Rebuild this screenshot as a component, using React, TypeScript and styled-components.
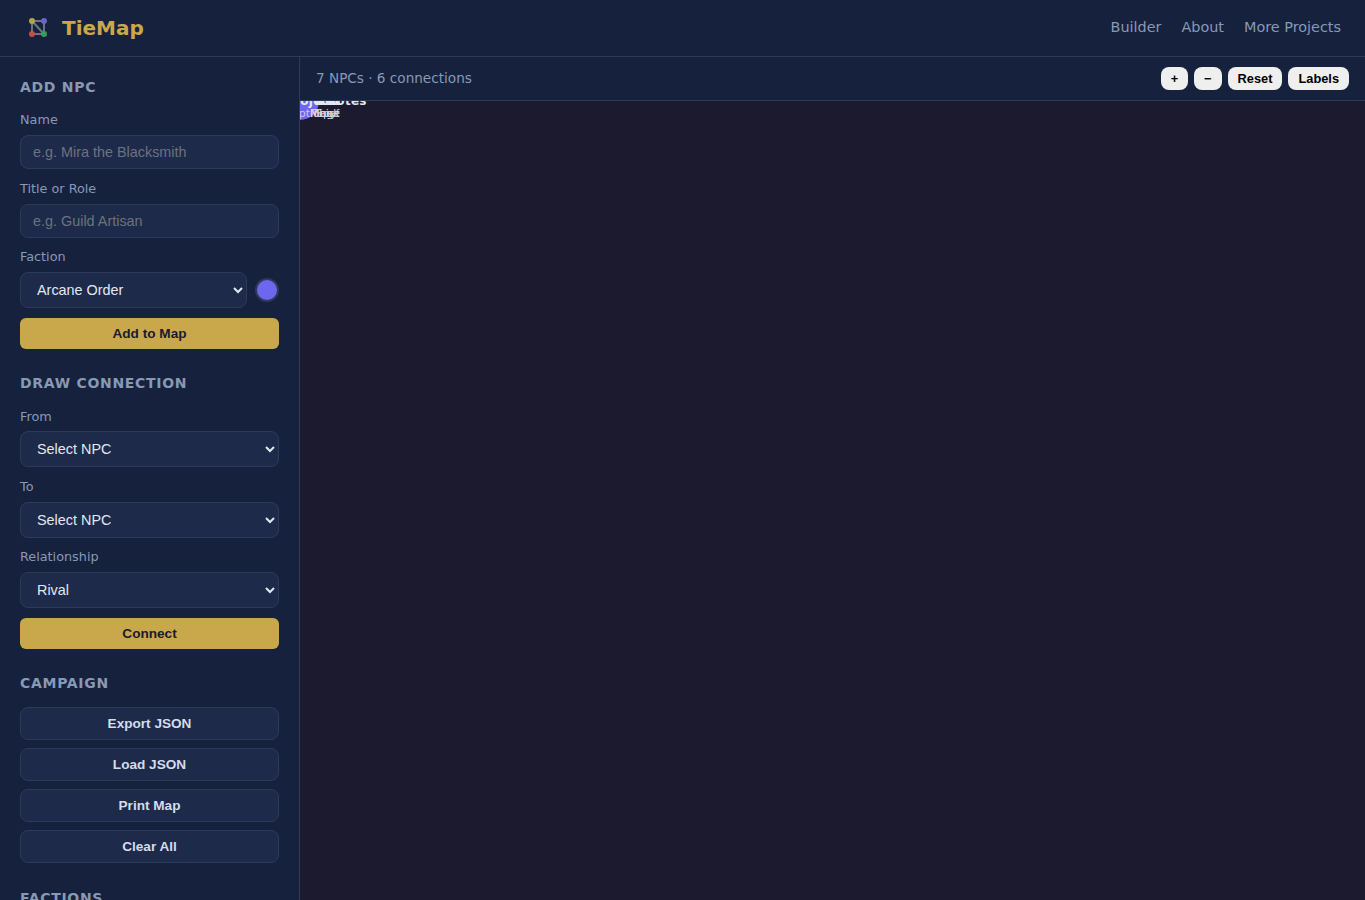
import React from "react";
import styled, { createGlobalStyle } from "styled-components";

const GlobalStyle = createGlobalStyle`
  html, body {
    margin: 0;
    height: 100%;
    overflow: hidden;
    background: #1c1a2e;
  }
  * {
    box-sizing: border-box;
  }
`;

const Page = styled.div`
  height: 900px;
  display: flex;
  flex-direction: column;
  font-family: "DejaVu Sans", sans-serif;
  color: #e2e8f0;
`;

const Header = styled.header`
  height: 57px;
  flex-shrink: 0;
  display: flex;
  align-items: center;
  justify-content: space-between;
  padding: 0 24px 2px;
  background: #16213e;
  border-bottom: 1px solid #2d3a5c;
`;

const Brand = styled.div`
  display: flex;
  align-items: center;
  gap: 10px;
  margin-top: 2px;
  font-size: 20px;
  font-weight: 700;
  color: #c9a84c;
`;

const Nav = styled.nav`
  display: flex;
  gap: 20px;
`;

const NavLink = styled.a`
  font-size: 14.4px;
  color: #8899b4;
`;

const Body = styled.div`
  flex: 1;
  display: flex;
  min-height: 0;
`;

const Sidebar = styled.aside`
  width: 300px;
  flex-shrink: 0;
  padding: 20px 20px 0;
  background: #16213e;
  border-right: 1px solid #2d3a5c;
  overflow: hidden;
`;

const Section = styled.section`
  margin-bottom: 24.6px;
`;

const SectionTitle = styled.h3`
  margin: 0 0 12.3px;
  font-size: 14px;
  line-height: 21px;
  font-weight: 700;
  letter-spacing: 0.7px;
  color: #8899b4;
  text-transform: uppercase;
`;

const Field = styled.div`
  margin-bottom: 9.7px;
`;

const Label = styled.label`
  display: block;
  margin-bottom: 4.4px;
  font-size: 12.8px;
  line-height: 20.4px;
  color: #8899b4;
`;

const TextInput = styled.input`
  display: block;
  width: 100%;
  height: 34px;
  padding: 0 12px;
  font-family: "Liberation Sans", Arial, sans-serif;
  font-size: 14.4px;
  color: #e2e8f0;
  background: #1e2a4a;
  border: 1px solid #2d3a5c;
  border-radius: 8px;
  &::placeholder {
    color: #6b7280;
  }
`;

const Select = styled.select`
  display: block;
  width: 100%;
  height: 35.9px;
  padding: 0 12px;
  font-family: "Liberation Sans", Arial, sans-serif;
  font-size: 14.4px;
  color: #e2e8f0;
  background: #1e2a4a;
  border: 1px solid #2d3a5c;
  border-radius: 8px;
`;

const ColorRow = styled.div`
  display: flex;
  align-items: center;
  gap: 8px;
`;

const Swatch = styled.span<{ $color: string }>`
  width: 24px;
  height: 24px;
  flex-shrink: 0;
  border-radius: 50%;
  background: ${(p) => p.$color};
  border: 2px solid #2d3a5c;
`;

const PrimaryButton = styled.button`
  display: block;
  width: 100%;
  height: 31px;
  font-family: "Liberation Sans", Arial, sans-serif;
  font-size: 13.6px;
  font-weight: 700;
  color: #1a1a2e;
  background: #c9a84c;
  border: none;
  border-radius: 6px;
`;

const ButtonStack = styled.div`
  display: grid;
  gap: 8px;
  margin-top: 13px;
`;

const GhostButton = styled.button`
  display: block;
  width: 100%;
  height: 33px;
  font-family: "Liberation Sans", Arial, sans-serif;
  font-size: 13.6px;
  font-weight: 700;
  color: #d5dcea;
  background: #1e2a4a;
  border: 1px solid #2d3a5c;
  border-radius: 8px;
`;

const Main = styled.main`
  flex: 1;
  display: flex;
  flex-direction: column;
  min-width: 0;
`;

const Toolbar = styled.div`
  height: 44px;
  flex-shrink: 0;
  display: flex;
  align-items: center;
  justify-content: space-between;
  padding: 0 16px;
  background: #16213e;
  border-bottom: 1px solid #2d3a5c;
`;

const Stats = styled.span`
  margin-top: -1px;
  font-size: 13.6px;
  color: #8899b4;
`;

const Controls = styled.div`
  display: flex;
  gap: 6px;
`;

const ToolButton = styled.button`
  height: 23px;
  padding: 0 10px;
  font-family: "Liberation Sans", Arial, sans-serif;
  font-size: 12.8px;
  font-weight: 700;
  color: #000;
  background: #efefef;
  border: none;
  border-radius: 8px;
`;

const Canvas = styled.div`
  position: relative;
  flex: 1;
  overflow: hidden;
  background: #1c1a2e;
`;

const NodeDisc = styled.span`
  position: absolute;
  left: -19px;
  top: -19px;
  width: 38px;
  height: 38px;
  border-radius: 50%;
  background: #6f66f0;
`;

const NodeName = styled.span<{ $left: number }>`
  position: absolute;
  left: ${(p) => p.$left}px;
  top: -7px;
  font-size: 12px;
  line-height: 14px;
  font-weight: 700;
  letter-spacing: 0.3px;
  white-space: nowrap;
  color: #e2e8f0;
`;

const NodeRole = styled.span<{ $left: number; $tint?: boolean }>`
  position: absolute;
  left: ${(p) => p.$left}px;
  top: 6px;
  font-size: 11px;
  line-height: 13px;
  white-space: nowrap;
  color: ${(p) => (p.$tint ? "#c9c4ff" : "#cfd3df")};
`;

const nodeNames = [
  { left: -15, text: "Project" },
  { left: 26, text: "Notes" },
  { left: 17, text: "Kel" },
  { left: 16, text: "Vex" },
  { left: 15, text: "Ash" },
];

const nodeRoles = [
  { left: -8, text: "options", tint: true },
  { left: 12, text: "Thief" },
  { left: 10, text: "Monk" },
  { left: 10, text: "Mage" },
  { left: 16, text: "Spy" },
];

function LogoMark() {
  return (
    <svg width="28" height="28" viewBox="0 0 28 28" aria-hidden="true">
      <g stroke="#6b7280" strokeWidth="2">
        <line x1="8" y1="7" x2="20" y2="7" />
        <line x1="8" y1="7" x2="8" y2="20" />
        <line x1="8" y1="7" x2="20" y2="20" />
        <line x1="20" y1="7" x2="20" y2="20" />
        <line x1="8" y1="20" x2="20" y2="20" />
      </g>
      <circle cx="8" cy="7" r="3" fill="#b5a24a" />
      <circle cx="20" cy="7" r="3" fill="#6a66c8" />
      <circle cx="8" cy="20" r="3" fill="#c2504a" />
      <circle cx="20" cy="20" r="3" fill="#3a9a5a" />
    </svg>
  );
}

export default function App() {
  return (
    <Page>
      <GlobalStyle />
      <Header>
        <Brand>
          <LogoMark />
          TieMap
        </Brand>
        <Nav>
          <NavLink>Builder</NavLink>
          <NavLink>About</NavLink>
          <NavLink>More Projects</NavLink>
        </Nav>
      </Header>
      <Body>
        <Sidebar>
          <Section>
            <SectionTitle>Add NPC</SectionTitle>
            <Field>
              <Label>Name</Label>
              <TextInput placeholder="e.g. Mira the Blacksmith" />
            </Field>
            <Field>
              <Label>Title or Role</Label>
              <TextInput placeholder="e.g. Guild Artisan" />
            </Field>
            <Field>
              <Label>Faction</Label>
              <ColorRow>
                <Select defaultValue="Arcane Order">
                  <option>Arcane Order</option>
                </Select>
                <Swatch $color="#6f66f0" />
              </ColorRow>
            </Field>
            <PrimaryButton>Add to Map</PrimaryButton>
          </Section>
          <Section>
            <SectionTitle>Draw Connection</SectionTitle>
            <Field>
              <Label>From</Label>
              <Select defaultValue="Select NPC">
                <option>Select NPC</option>
              </Select>
            </Field>
            <Field>
              <Label>To</Label>
              <Select defaultValue="Select NPC">
                <option>Select NPC</option>
              </Select>
            </Field>
            <Field>
              <Label>Relationship</Label>
              <Select defaultValue="Rival">
                <option>Rival</option>
              </Select>
            </Field>
            <PrimaryButton>Connect</PrimaryButton>
          </Section>
          <Section>
            <SectionTitle>Campaign</SectionTitle>
            <ButtonStack>
              <GhostButton>Export JSON</GhostButton>
              <GhostButton>Load JSON</GhostButton>
              <GhostButton>Print Map</GhostButton>
              <GhostButton>Clear All</GhostButton>
            </ButtonStack>
          </Section>
          <Section>
            <SectionTitle>Factions</SectionTitle>
          </Section>
        </Sidebar>
        <Main>
          <Toolbar>
            <Stats>7 NPCs · 6 connections</Stats>
            <Controls>
              <ToolButton>+</ToolButton>
              <ToolButton>−</ToolButton>
              <ToolButton>Reset</ToolButton>
              <ToolButton>Labels</ToolButton>
            </Controls>
          </Toolbar>
          <Canvas>
            <NodeDisc />
            {nodeNames.map((n) => (
              <NodeName key={n.text} $left={n.left}>
                {n.text}
              </NodeName>
            ))}
            {nodeRoles.map((r) => (
              <NodeRole key={r.text} $left={r.left} $tint={r.tint}>
                {r.text}
              </NodeRole>
            ))}
          </Canvas>
        </Main>
      </Body>
    </Page>
  );
}
